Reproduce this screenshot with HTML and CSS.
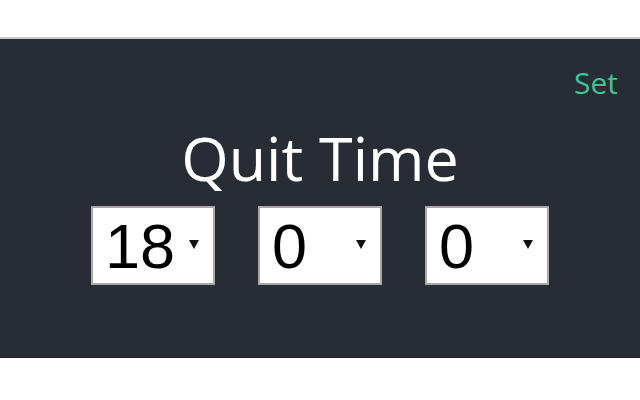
FILE: index.html
```html
<!DOCTYPE html>
<html>
<head>
<meta charset="utf-8">
<link rel="stylesheet" href="styles.css">
</head>
<body>
<div class="panel">
  <div class="topbar"><a class="set" href="#">Set</a></div>
  <h1 class="title">Quit Time</h1>
  <div class="pickers">
    <label class="picker">
      <select class="sel"><option>18</option></select>
      <svg class="arrow" width="10" height="9" viewBox="0 0 10 9"><path d="M0 0H10L5 9Z" fill="#111"/></svg>
    </label>
    <label class="picker">
      <select class="sel"><option>0</option></select>
      <svg class="arrow" width="10" height="9" viewBox="0 0 10 9"><path d="M0 0H10L5 9Z" fill="#111"/></svg>
    </label>
    <label class="picker">
      <select class="sel"><option>0</option></select>
      <svg class="arrow" width="10" height="9" viewBox="0 0 10 9"><path d="M0 0H10L5 9Z" fill="#111"/></svg>
    </label>
  </div>
</div>
</body>
</html>
```
FILE: styles.css
```css
html, body {
  margin: 0;
  padding: 0;
  background: #ffffff;
}
.panel {
  margin-top: 37px;
  height: 318px;
  background: #282c34;
  border-top: 2px solid #c9c9c9;
  border-bottom: 1px solid #1e2127;
  display: flex;
  flex-direction: column;
  align-items: center;
  font-family: "Open Sans", "Noto Sans", sans-serif;
}
.topbar {
  align-self: stretch;
  display: flex;
  justify-content: flex-end;
  padding: 24px 22px 0 0;
  height: 40px;
}
.set {
  color: #3cc596;
  text-decoration: none;
  font-size: 30px;
  line-height: 40px;
}
.title {
  margin: 22px 0 0 0;
  color: #ffffff;
  font-weight: 400;
  font-size: 61px;
  line-height: 66px;
}
.pickers {
  display: flex;
  gap: 43px;
  margin-top: 15px;
}
.picker {
  position: relative;
  display: block;
  width: 120px;
  height: 75px;
  background: #ffffff;
  border: 2px solid #a9a9a9;
}
.sel {
  appearance: none;
  -webkit-appearance: none;
  border: none;
  outline: none;
  background: transparent;
  width: 100%;
  height: 100%;
  padding: 0 0 0 12px;
  margin: 0;
  font-family: "Liberation Sans", Arial, sans-serif;
  font-size: 63px;
  color: #000;
}
.arrow {
  position: absolute;
  right: 14px;
  top: 32px;
  pointer-events: none;
}
```
